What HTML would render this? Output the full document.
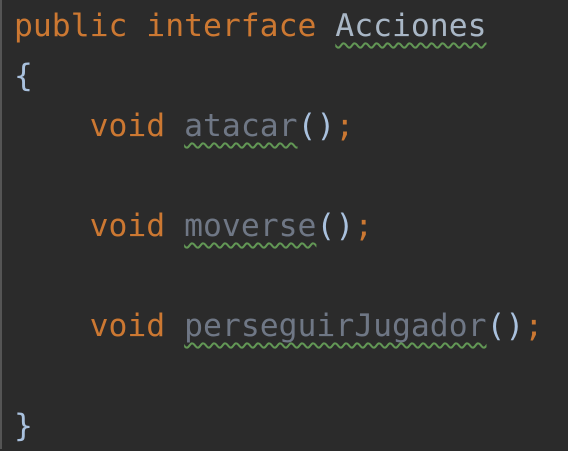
<!DOCTYPE html>
<html><head><style>
html,body{margin:0;padding:0;background:#2b2b2b;width:568px;height:449px;overflow:hidden}
body{border-left:2px solid #555}
pre{margin:0;position:absolute;left:14px;top:1px;font-family:"DejaVu Sans Mono","Liberation Mono",monospace;font-size:31.4px;line-height:50px;color:#a9b7c6}
.k{color:#cc7832}.g{color:#6f7785}.b{color:#a9c1de}
.w{text-decoration:underline wavy #629755;text-decoration-thickness:2px;text-underline-offset:6px;text-decoration-skip-ink:none}
</style></head><body>
<pre><span class="k">public interface</span> <span class="w">Acciones</span>
<span class="b">{</span>
    <span class="k">void</span> <span class="g w">atacar</span><span class="b">()</span><span class="k">;</span>

    <span class="k">void</span> <span class="g w">moverse</span><span class="b">()</span><span class="k">;</span>

    <span class="k">void</span> <span class="g w">perseguirJugador</span><span class="b">()</span><span class="k">;</span>

<span class="b">}</span></pre>
</body></html>
